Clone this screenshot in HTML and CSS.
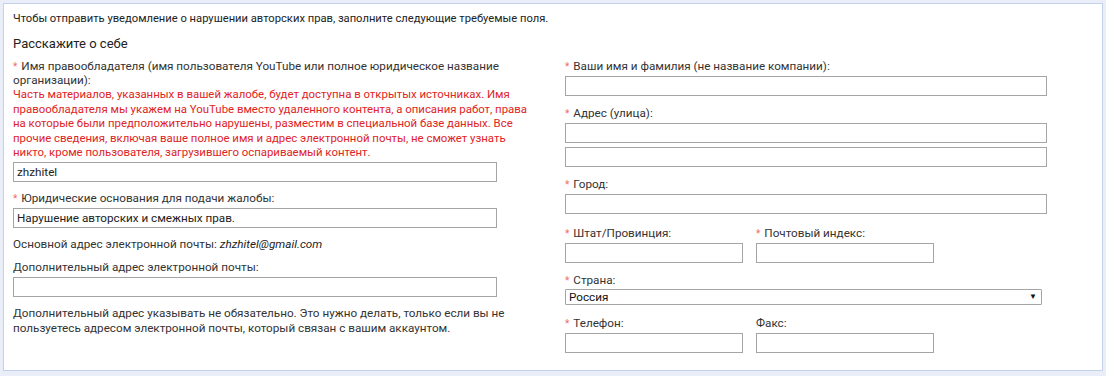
FILE: index.html
```html
<!DOCTYPE html>
<html lang="ru">
<head>
    <meta charset="UTF-8">
    <title>Уведомление о нарушении авторских прав</title>
    <link rel="stylesheet" href="styles.css">
</head>
<body>
    <div class="panel">
        <div class="intro">Чтобы отправить уведомление о нарушении авторских прав, заполните следующие требуемые поля.</div>
        <div class="heading">Расскажите о себе</div>
        <div class="columns">
            <div class="col">
                <div class="field">
                    <div class="label"><span class="req">*</span>Имя правообладателя (имя пользователя YouTube или полное юридическое название организации):</div>
                    <div class="warn">Часть материалов, указанных в вашей жалобе, будет доступна в открытых источниках. Имя правообладателя мы укажем на YouTube вместо удаленного контента, а описания работ, права на которые были предположительно нарушены, разместим в специальной базе данных. Все прочие сведения, включая ваше полное имя и адрес электронной почты, не сможет узнать никто, кроме пользователя, загрузившего оспариваемый контент.</div>
                    <div class="input">zhzhitel</div>
                </div>
                <div class="field">
                    <div class="label"><span class="req">*</span>Юридические основания для подачи жалобы:</div>
                    <div class="input">Нарушение авторских и смежных прав.</div>
                </div>
                <div class="field">
                    <div class="label">Основной адрес электронной почты: <i>zhzhitel@gmail.com</i></div>
                </div>
                <div class="field">
                    <div class="label">Дополнительный адрес электронной почты:</div>
                    <div class="input"></div>
                </div>
                <div class="field">
                    <div class="note">Дополнительный адрес указывать не обязательно. Это нужно делать, только если вы не пользуетесь адресом электронной почты, который связан с вашим аккаунтом.</div>
                </div>
            </div>
            <div class="col right">
                <div class="field">
                    <div class="label"><span class="req">*</span>Ваши имя и фамилия (не название компании):</div>
                    <div class="input"></div>
                </div>
                <div class="field">
                    <div class="label"><span class="req">*</span>Адрес (улица):</div>
                    <div class="input"></div>
                    <div class="input"></div>
                </div>
                <div class="field">
                    <div class="label"><span class="req">*</span>Город:</div>
                    <div class="input"></div>
                </div>
                <div class="pair">
                    <div class="field">
                        <div class="label"><span class="req">*</span>Штат/Провинция:</div>
                        <div class="input short"></div>
                    </div>
                    <div class="field">
                        <div class="label"><span class="req">*</span>Почтовый индекс:</div>
                        <div class="input short"></div>
                    </div>
                </div>
                <div class="field">
                    <div class="label"><span class="req">*</span>Страна:</div>
                    <div class="select">Россия<span class="arrow">&#9660;</span></div>
                </div>
                <div class="pair">
                    <div class="field">
                        <div class="label"><span class="req">*</span>Телефон:</div>
                        <div class="input short"></div>
                    </div>
                    <div class="field">
                        <div class="label">Факс:</div>
                        <div class="input short"></div>
                    </div>
                </div>
            </div>
        </div>
    </div>
</body>
</html>
```

FILE: styles.css
```css
body {
    margin: 0;
    padding: 3px 3px 0 3px;
    background-color: #e9eef8;
    font-family: Roboto, "Liberation Sans", sans-serif;
    color: #222;
}

.panel {
    background-color: #fff;
    border: 1px solid #c5d1ea;
    height: 368px;
    box-sizing: border-box;
    padding: 7px 10px 0 9px;
}

.intro {
    font-size: 11.2px;
    line-height: 15px;
}

.heading {
    font-size: 13px;
    line-height: 16px;
    margin-top: 10px;
}

.columns {
    display: flex;
    gap: 37px;
    margin-top: 7px;
}

.col {
    width: 515px;
    display: flex;
    flex-direction: column;
    gap: 9px;
}

.col.right {
    width: 482px;
    gap: 10px;
}

.label, .note {
    font-size: 11.7px;
    line-height: 14px;
    color: #333;
}

.label i {
    color: #222;
}

.req {
    color: #f06a6a;
    font-size: 10px;
    line-height: 1;
    margin-right: 4px;
}

.warn {
    font-size: 11.4px;
    line-height: 14.5px;
    color: #e02424;
}

.note {
    line-height: 15px;
}

.input {
    width: 484px;
    height: 20px;
    border: 1px solid #a5a5a5;
    box-sizing: border-box;
    margin-top: 3px;
    font-size: 11.7px;
    line-height: 18px;
    padding-left: 3px;
    color: #222;
}

.warn + .input {
    margin-top: 2px;
}

.input + .input {
    margin-top: 4px;
}

.right .input {
    width: 482px;
}

.right .input.short {
    width: 178px;
}

.pair {
    display: flex;
    gap: 13px;
    margin-top: 1.5px;
}

.select {
    width: 477px;
    height: 16px;
    box-sizing: border-box;
    border: 1px solid #a5a5a5;
    border-radius: 1px;
    margin-top: 2px;
    font-size: 11.7px;
    line-height: 14px;
    padding-left: 3px;
    display: flex;
    justify-content: space-between;
    color: #111;
}

.arrow {
    font-size: 8px;
    padding-right: 4px;
    line-height: 14px;
}
```
